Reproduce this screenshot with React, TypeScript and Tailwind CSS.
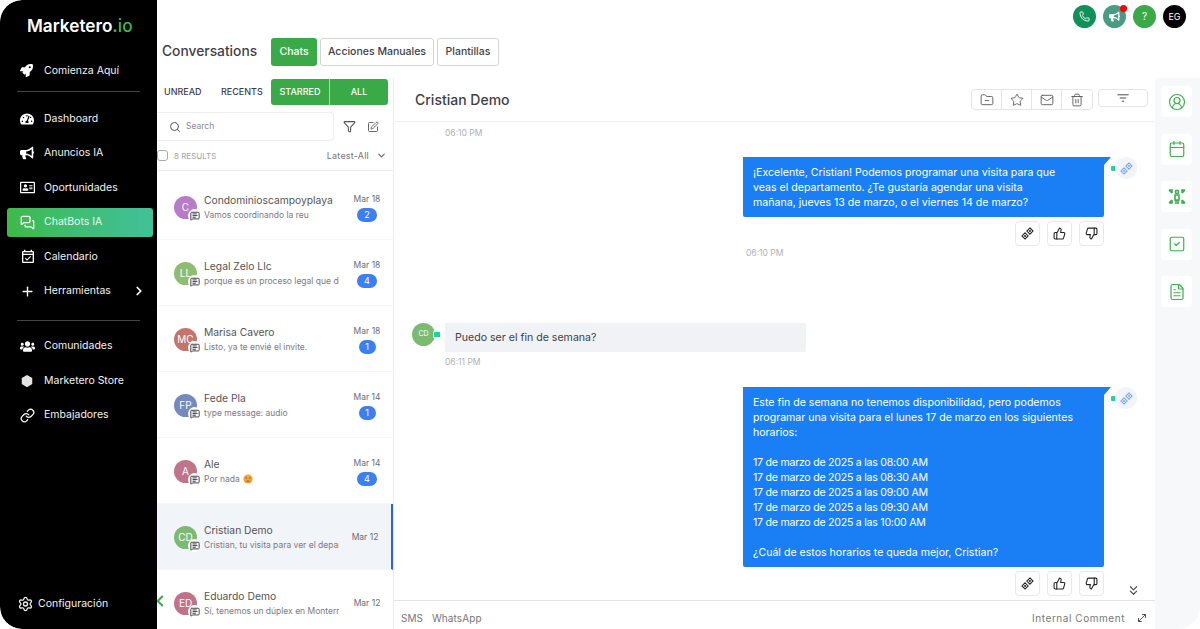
import React from "react";
import {
  Phone, MessagesSquare, Plus, ChevronRight, ChevronDown, ChevronLeft, ChevronsDown,
  Link as LinkIcon, Settings, Search, Filter, SquarePen, MessageSquareText, FolderMinus, Star, Mail, Trash2,
  ThumbsUp, ThumbsDown, CircleUserRound, Calendar, SquareCheck, FileText, MoveDiagonal,
} from "lucide-react";
import { FaRocket, FaTachometerAlt, FaBullhorn, FaRegAddressCard, FaUsers } from "react-icons/fa";
import { MdOutlineEventAvailable } from "react-icons/md";

const font = { fontFamily: "Inter, 'Open Sans', sans-serif" };

function Gem({ className = "" }: { className?: string }) {
  return (
    <svg viewBox="0 0 16 16" className={className} fill="none" stroke="currentColor" strokeWidth="1.3">
      <path d="M11 1.2l3.8 3.8L11 8.8 7.2 5z" />
      <path d="M5 7.2l3.8 3.8L5 14.8 1.2 11z" />
      <path d="M11 3.4l1.6 1.6L11 6.6 9.4 5zM5 9.4L6.6 11 5 12.6 3.4 11z" fill="currentColor" stroke="none" />
    </svg>
  );
}

function NavItem({ icon, label, active, right }: { icon: React.ReactNode; label: string; active?: boolean; right?: React.ReactNode }) {
  return (
    <div className={`ml-[7px] mr-[4px] flex h-[29px] items-center rounded-[3px] pl-[13px] pr-[7px] ${active ? "bg-gradient-to-r from-[#3dba48] to-[#41c19a]" : ""}`}>
      <span className="flex w-[24px] shrink-0 items-center text-white">{icon}</span>
      <span className="flex-1 text-[10.5px] text-[#f2f2f2]">{label}</span>
      {right}
    </div>
  );
}

function Hexagon() {
  return (
    <svg viewBox="0 0 16 16" className="h-[14px] w-[14px]" fill="#e4e4e4">
      <path d="M8 1l6 3.5v7L8 15l-6-3.5v-7z" />
    </svg>
  );
}

function Sidebar() {
  return (
    <aside className="flex h-full w-[157px] shrink-0 flex-col rounded-l-[22px] bg-black">
      <div className="pl-[27px] pt-[14px] text-[17.2px] font-semibold leading-[24px] text-white">
        Marketero<span className="text-[#3dba48]">.</span><span className="font-medium text-[#3dba48]">io</span>
      </div>
      <div className="mt-[18px]">
        <NavItem icon={<FaRocket size={13} />} label="Comienza Aquí" />
      </div>
      <div className="mx-[17px] mb-[12px] mt-[6px] h-px bg-[#444]" />
      <div className="flex flex-col gap-[5.5px]">
        <NavItem icon={<FaTachometerAlt size={14} />} label="Dashboard" />
        <NavItem icon={<FaBullhorn size={14} />} label="Anuncios IA" />
        <NavItem icon={<FaRegAddressCard size={15} />} label="Oportunidades" />
        <NavItem icon={<MessagesSquare size={15} />} label="ChatBots IA" active />
        <NavItem icon={<MdOutlineEventAvailable size={16} />} label="Calendario" />
        <NavItem icon={<Plus size={15} strokeWidth={2.2} />} label="Herramientas" right={<ChevronRight size={14} strokeWidth={3} className="text-white" />} />
      </div>
      <div className="mx-[17px] mb-[11px] mt-[14px] h-px bg-[#444]" />
      <div className="flex flex-col gap-[5.5px]">
        <NavItem icon={<FaUsers size={15} />} label="Comunidades" />
        <NavItem icon={<Hexagon />} label="Marketero Store" />
        <NavItem icon={<LinkIcon size={15} />} label="Embajadores" />
      </div>
      <div className="mt-auto mb-[17px] flex items-center pl-[13px]">
        <Settings size={16} className="w-[25px] text-[#eee]" />
        <span className="text-[10.5px] text-[#f2f2f2]">Configuración</span>
      </div>
    </aside>
  );
}

function TopCircle({ className, children }: { className: string; children: React.ReactNode }) {
  return <div className={`relative flex h-[23px] w-[23px] items-center justify-center rounded-full text-white ${className}`}>{children}</div>;
}

function TabBtn({ label, active, w }: { label: string; active?: boolean; w: string }) {
  return (
    <div className={`flex h-[28px] items-center justify-center rounded-[3px] text-[10.5px] font-medium ${w} ${active ? "bg-[#3aaa48] text-white" : "border border-[#d4d4d8] bg-white text-[#3f3f46]"}`}>
      {label}
    </div>
  );
}

type Conv = { i: string; c: string; name: string; msg: string; date: string; n?: number; sel?: boolean; emoji?: boolean };
const convs: Conv[] = [
  { i: "C", c: "bg-[#b87cc6]", name: "Condominioscampoyplaya", msg: "Vamos coordinando la reu", date: "Mar 18", n: 2 },
  { i: "LL", c: "bg-[#8fbc70]", name: "Legal Zelo Llc", msg: "porque es un proceso legal que de", date: "Mar 18", n: 4 },
  { i: "MC", c: "bg-[#c4746c]", name: "Marisa Cavero", msg: "Listo, ya te envié el invite.", date: "Mar 18", n: 1 },
  { i: "FP", c: "bg-[#7689bf]", name: "Fede Pla", msg: "type message: audio", date: "Mar 14", n: 1 },
  { i: "A", c: "bg-[#c0738a]", name: "Ale", msg: "Por nada", date: "Mar 14", n: 4, emoji: true },
  { i: "CD", c: "bg-[#7cba72]", name: "Cristian Demo", msg: "Cristian, tu visita para ver el depar", date: "Mar 12", sel: true },
  { i: "ED", c: "bg-[#c0728a]", name: "Eduardo Demo", msg: "Sí, tenemos un dúplex en Monterric", date: "Mar 12" },
];

function ConvRow({ c }: { c: Conv }) {
  return (
    <div className={`flex h-[66px] shrink-0 items-center border-b border-[#f6f6f7] pl-[17px] pt-[2px] ${c.sel ? "border-r-[2px] border-r-[#2563eb] bg-[#f1f4f8] pr-[12px]" : "pr-[12px]"}`}>
      <div className={`relative flex h-[23px] w-[23px] shrink-0 items-center justify-center rounded-full text-[10px] text-white ${c.c}`}>
        <span className="whitespace-nowrap">{c.i}</span>
        <span className="absolute -bottom-[3px] -right-[4px] flex h-[13px] w-[13px] items-center justify-center rounded-full bg-white text-[#333]">
          <MessageSquareText size={10} strokeWidth={2.2} />
        </span>
      </div>
      <div className="ml-[7px] min-w-0 w-[135px]">
        <div className="truncate text-[10.3px] leading-[15px] text-[#555]">{c.name}</div>
        <div className="flex items-center gap-[3px] overflow-hidden whitespace-nowrap text-[8.5px] leading-[15px] text-[#7b7b80]">
          {c.msg}
          {c.emoji && (
            <svg viewBox="0 0 12 12" className="h-[10px] w-[10px] shrink-0">
              <circle cx="6" cy="6" r="5.5" fill="#f0a53a" />
              <path d="M2.8 4.8h2M7.2 4.8h2M4 8.6h4" stroke="#8a4b12" strokeWidth="1" />
            </svg>
          )}
        </div>
      </div>
      <div className="ml-auto flex w-[28px] shrink-0 flex-col items-center">
        <div className="-mt-[1px] whitespace-nowrap text-[8.5px] leading-[15px] text-[#6b6b70]">{c.date}</div>
        {c.n && (
          <div className={`mt-[1px] flex h-[14px] items-center justify-center rounded-full bg-[#3b7ff0] text-[9px] text-white ${c.n === 1 ? "w-[17px]" : "w-[20px]"}`}>{c.n}</div>
        )}
      </div>
    </div>
  );
}

function ListPane() {
  return (
    <section className="relative flex h-full w-[236px] shrink-0 flex-col overflow-hidden">
      <div className="flex h-[27px] shrink-0 items-center pl-[7px] text-[9px] font-medium text-[#3f3f46]">
        <span className="w-[57px]">UNREAD</span>
        <span className="w-[50px]">RECENTS</span>
        <div className="flex h-[26px] w-[117px] overflow-hidden rounded-[3px] bg-[#3aaa48] text-white">
          <span className="flex w-[59px] items-center justify-center border-r border-[#a7d8ad]">STARRED</span>
          <span className="flex flex-1 items-center justify-center">ALL</span>
        </div>
      </div>
      <div className="mt-[7px] flex h-[29px] shrink-0 items-center">
        <div className="flex h-full w-[177px] items-center rounded-r-[4px] border border-l-0 border-[#eeeef0] pl-[12px] text-[8.5px] text-[#8b8b90]">
          <Search size={12} className="mr-[5px] text-[#555]" />
          Search
        </div>
        <Filter size={13} className="ml-[9px] text-[#555]" />
        <SquarePen size={12} className="ml-[11px] text-[#666]" />
      </div>
      <div className="flex h-[30px] shrink-0 items-center border-b border-[#ececef] pr-[6px] text-[8px] text-[#a3a3a8]">
        <span className="h-[11px] w-[11px] rounded-[3px] border border-[#aaa]" />
        <span className="ml-[6px]">8 RESULTS</span>
        <span className="ml-auto text-[9px] tracking-[0.2px] text-[#777]">Latest-All</span>
        <ChevronDown size={11} strokeWidth={2.4} className="ml-[7px] text-[#666]" />
      </div>
      <div className="flex flex-col pt-[3px]">
        {convs.map((c) => <ConvRow key={c.name} c={c} />)}
      </div>
      <ChevronLeft size={18} strokeWidth={2.6} className="absolute bottom-[19px] -left-[6px] text-[#3aaa48]" />
    </section>
  );
}

function OutBubble({ children }: { children: React.ReactNode }) {
  return (
    <div className="ml-auto mr-[51px] flex w-[361px] flex-col items-end">
      <div className="relative w-full rounded-b-[2px] bg-[#1a7ff5] px-[10px] py-[7.5px] text-[10.6px] leading-[15px] whitespace-pre-line text-white">
        {children}
        <svg viewBox="0 0 7 8" className="absolute left-full top-0 h-[8px] w-[7px]"><path d="M0 0h7L0 8z" fill="#1a7ff5" /></svg>
        <span className="absolute -right-[13px] top-[9px] h-[5px] w-[6px] rounded-[1px] bg-[#1fd39a]" />
        <span className="absolute -right-[33px] top-0 flex h-[22px] w-[22px] items-center justify-center rounded-full bg-[#f1f4f8] text-[#7ea7ea]">
          <Gem className="h-[13px] w-[13px]" />
        </span>
      </div>
      <div className="mt-[4px] flex gap-[7px] text-[#222]">
        {[<Gem key="g" className="h-[13px] w-[13px]" />, <ThumbsUp key="u" size={13} />, <ThumbsDown key="d" size={13} />].map((ic, i) => (
          <span key={i} className="flex h-[25px] w-[25px] items-center justify-center rounded-[4px] border border-[#e8e8ea] bg-white">{ic}</span>
        ))}
      </div>
    </div>
  );
}

function ChatPane() {
  return (
    <section className="relative flex h-full min-w-0 flex-1 flex-col border-l border-[#ececef]">
      <div className="flex h-[44px] shrink-0 items-center border-b border-[#f0f0f2] pl-[21px]">
        <span className="-mt-[1px] text-[14px] font-medium text-[#3f3f46]">Cristian Demo</span>
        <div className="ml-auto flex h-[21px] items-stretch rounded-[4px] border border-[#e4e4e7] text-[#555]">
          <span className="flex w-[30px] items-center justify-center border-r border-[#e4e4e7]"><FolderMinus size={14} strokeWidth={1.5} /></span>
          <span className="flex w-[30px] items-center justify-center border-r border-[#e4e4e7]"><Star size={14} strokeWidth={1.5} /></span>
          <span className="flex w-[30px] items-center justify-center border-r border-[#e4e4e7]"><Mail size={14} strokeWidth={1.5} /></span>
          <span className="flex w-[30px] items-center justify-center"><Trash2 size={14} strokeWidth={1.5} /></span>
        </div>
        <div className="ml-[5px] mr-[7px] flex h-[18px] w-[50px] items-center justify-center self-start mt-[11px] rounded-[4px] border border-[#e4e4e7] text-[#444]">
          <svg viewBox="0 0 16 10" className="h-[8px] w-[14px]" stroke="currentColor" strokeWidth="1.2"><path d="M1 1h14M4 5h8M6.5 9h3" /></svg>
        </div>
      </div>
      <div className="relative flex-1 overflow-hidden">
        <div className="pl-[51px] pt-[5px] text-[8.5px] leading-[12px] text-[#b0b0b5]">06:10 PM</div>
        <div className="mt-[18px]">
          <OutBubble>{"¡Excelente, Cristian! Podemos programar una visita para que\nveas el departamento. ¿Te gustaría agendar una visita\nmañana, jueves 13 de marzo, o el viernes 14 de marzo?"}</OutBubble>
        </div>
        <div className="pl-[352px] pt-[1px] text-[8.5px] leading-[12px] text-[#b0b0b5]">06:10 PM</div>
        <div className="mt-[64px] flex items-start pl-[18px]">
          <div className="relative flex h-[23px] w-[23px] items-center justify-center rounded-full bg-[#7cba72] text-[7px] text-white">
            CD
            <span className="absolute -right-[6px] top-[8px] h-[7px] w-[8px] rounded-[1px] border border-white bg-[#1fd39a]" />
          </div>
          <div className="ml-[10px] flex h-[29px] w-[361px] items-center rounded-r-[2px] bg-[#f0f2f6] pl-[10px] text-[10.6px] text-[#3f3f46]">Puedo ser el fin de semana?</div>
        </div>
        <div className="mt-[4px] pl-[51px] text-[8.5px] leading-[12px] text-[#b0b0b5]">06:11 PM</div>
        <div className="mt-[19px]">
          <OutBubble>
            {"Este fin de semana no tenemos disponibilidad, pero podemos\nprogramar una visita para el lunes 17 de marzo en los siguientes\nhorarios:\n\n"}
            <span className="tracking-[-0.25px]">{"17 de marzo de 2025 a las 08:00 AM\n17 de marzo de 2025 a las 08:30 AM\n17 de marzo de 2025 a las 09:00 AM\n17 de marzo de 2025 a las 09:30 AM\n17 de marzo de 2025 a las 10:00 AM"}</span>
            {"\n\n¿Cuál de estos horarios te queda mejor, Cristian?"}
          </OutBubble>
        </div>
        <ChevronsDown size={15} className="absolute bottom-[2px] right-[14px] text-[#555]" />
      </div>
      <div className="flex h-[29px] shrink-0 items-center border-t border-[#e4e4e7] pl-[7px] pr-[7px] pt-[6px] text-[10px] text-[#777]">
        <span>SMS</span>
        <span className="ml-[9px] tracking-[0.1px]">WhatsApp</span>
        <span className="ml-auto tracking-[0.55px]">Internal Comment</span>
        <MoveDiagonal size={12} className="ml-[11px] text-[#555]" />
      </div>
    </section>
  );
}

function Rail() {
  const icons = [
    <CircleUserRound key="a" size={18} strokeWidth={1.6} />,
    <Calendar key="b" size={18} strokeWidth={1.6} />,
    <svg key="c" viewBox="0 0 18 18" className="h-[18px] w-[18px]" fill="none" stroke="currentColor" strokeWidth="1.6">
      <circle cx="9" cy="4" r="1.6" /><path d="M7 7h4v5H7zM8 12v4M10 12v4" /><path d="M1 2h3v3M1 2l3 3M17 2h-3v3M17 2l-3 3M1 15h3v-3M1 15l3-3M17 15h-3v-3M17 15l-3-3" />
    </svg>,
    <SquareCheck key="d" size={18} strokeWidth={1.6} />,
    <FileText key="e" size={18} strokeWidth={1.6} />,
  ];
  return (
    <aside className="flex h-full w-[45px] shrink-0 flex-col items-start gap-[16.5px] rounded-tl-[4px] bg-[#f7f8fa] pl-[6px] pt-[8px]">
      {icons.map((ic, i) => (
        <div key={i} className="flex h-[31px] w-[31px] items-center justify-center rounded-[4px] bg-white text-[#3fae4e]">{ic}</div>
      ))}
    </aside>
  );
}

export default function App() {
  return (
    <div className="h-[629px] w-[1200px] overflow-hidden bg-white" style={font}>
      <div className="flex h-full w-full overflow-hidden rounded-[22px]">
        <Sidebar />
        <main className="flex min-w-0 flex-1 flex-col">
          <header className="h-[78px] shrink-0">
            <div className="flex h-[28px] items-end justify-end gap-[7px] pr-[14px]">
              <TopCircle className="bg-[#10915a]"><Phone size={11} /></TopCircle>
              <TopCircle className="bg-[#4a9b83]">
                <FaBullhorn size={11} />
                <span className="absolute -right-[1px] top-0 h-[7px] w-[7px] rounded-full bg-[#f00]" />
              </TopCircle>
              <TopCircle className="bg-[#3aaa48] text-[10px]">?</TopCircle>
              <TopCircle className="bg-black text-[9px]">EG</TopCircle>
            </div>
            <div className="mt-[10px] flex items-center pl-[5px]">
              <h1 className="-mt-[1px] w-[109px] text-[13.8px] font-medium text-[#3f3f46]">Conversations</h1>
              <div className="flex gap-[3px]">
                <TabBtn label="Chats" active w="w-[46px]" />
                <TabBtn label="Acciones Manuales" w="w-[114px]" />
                <TabBtn label="Plantillas" w="w-[62px]" />
              </div>
            </div>
          </header>
          <div className="flex min-h-0 flex-1">
            <ListPane />
            <ChatPane />
            <Rail />
          </div>
        </main>
      </div>
    </div>
  );
}
